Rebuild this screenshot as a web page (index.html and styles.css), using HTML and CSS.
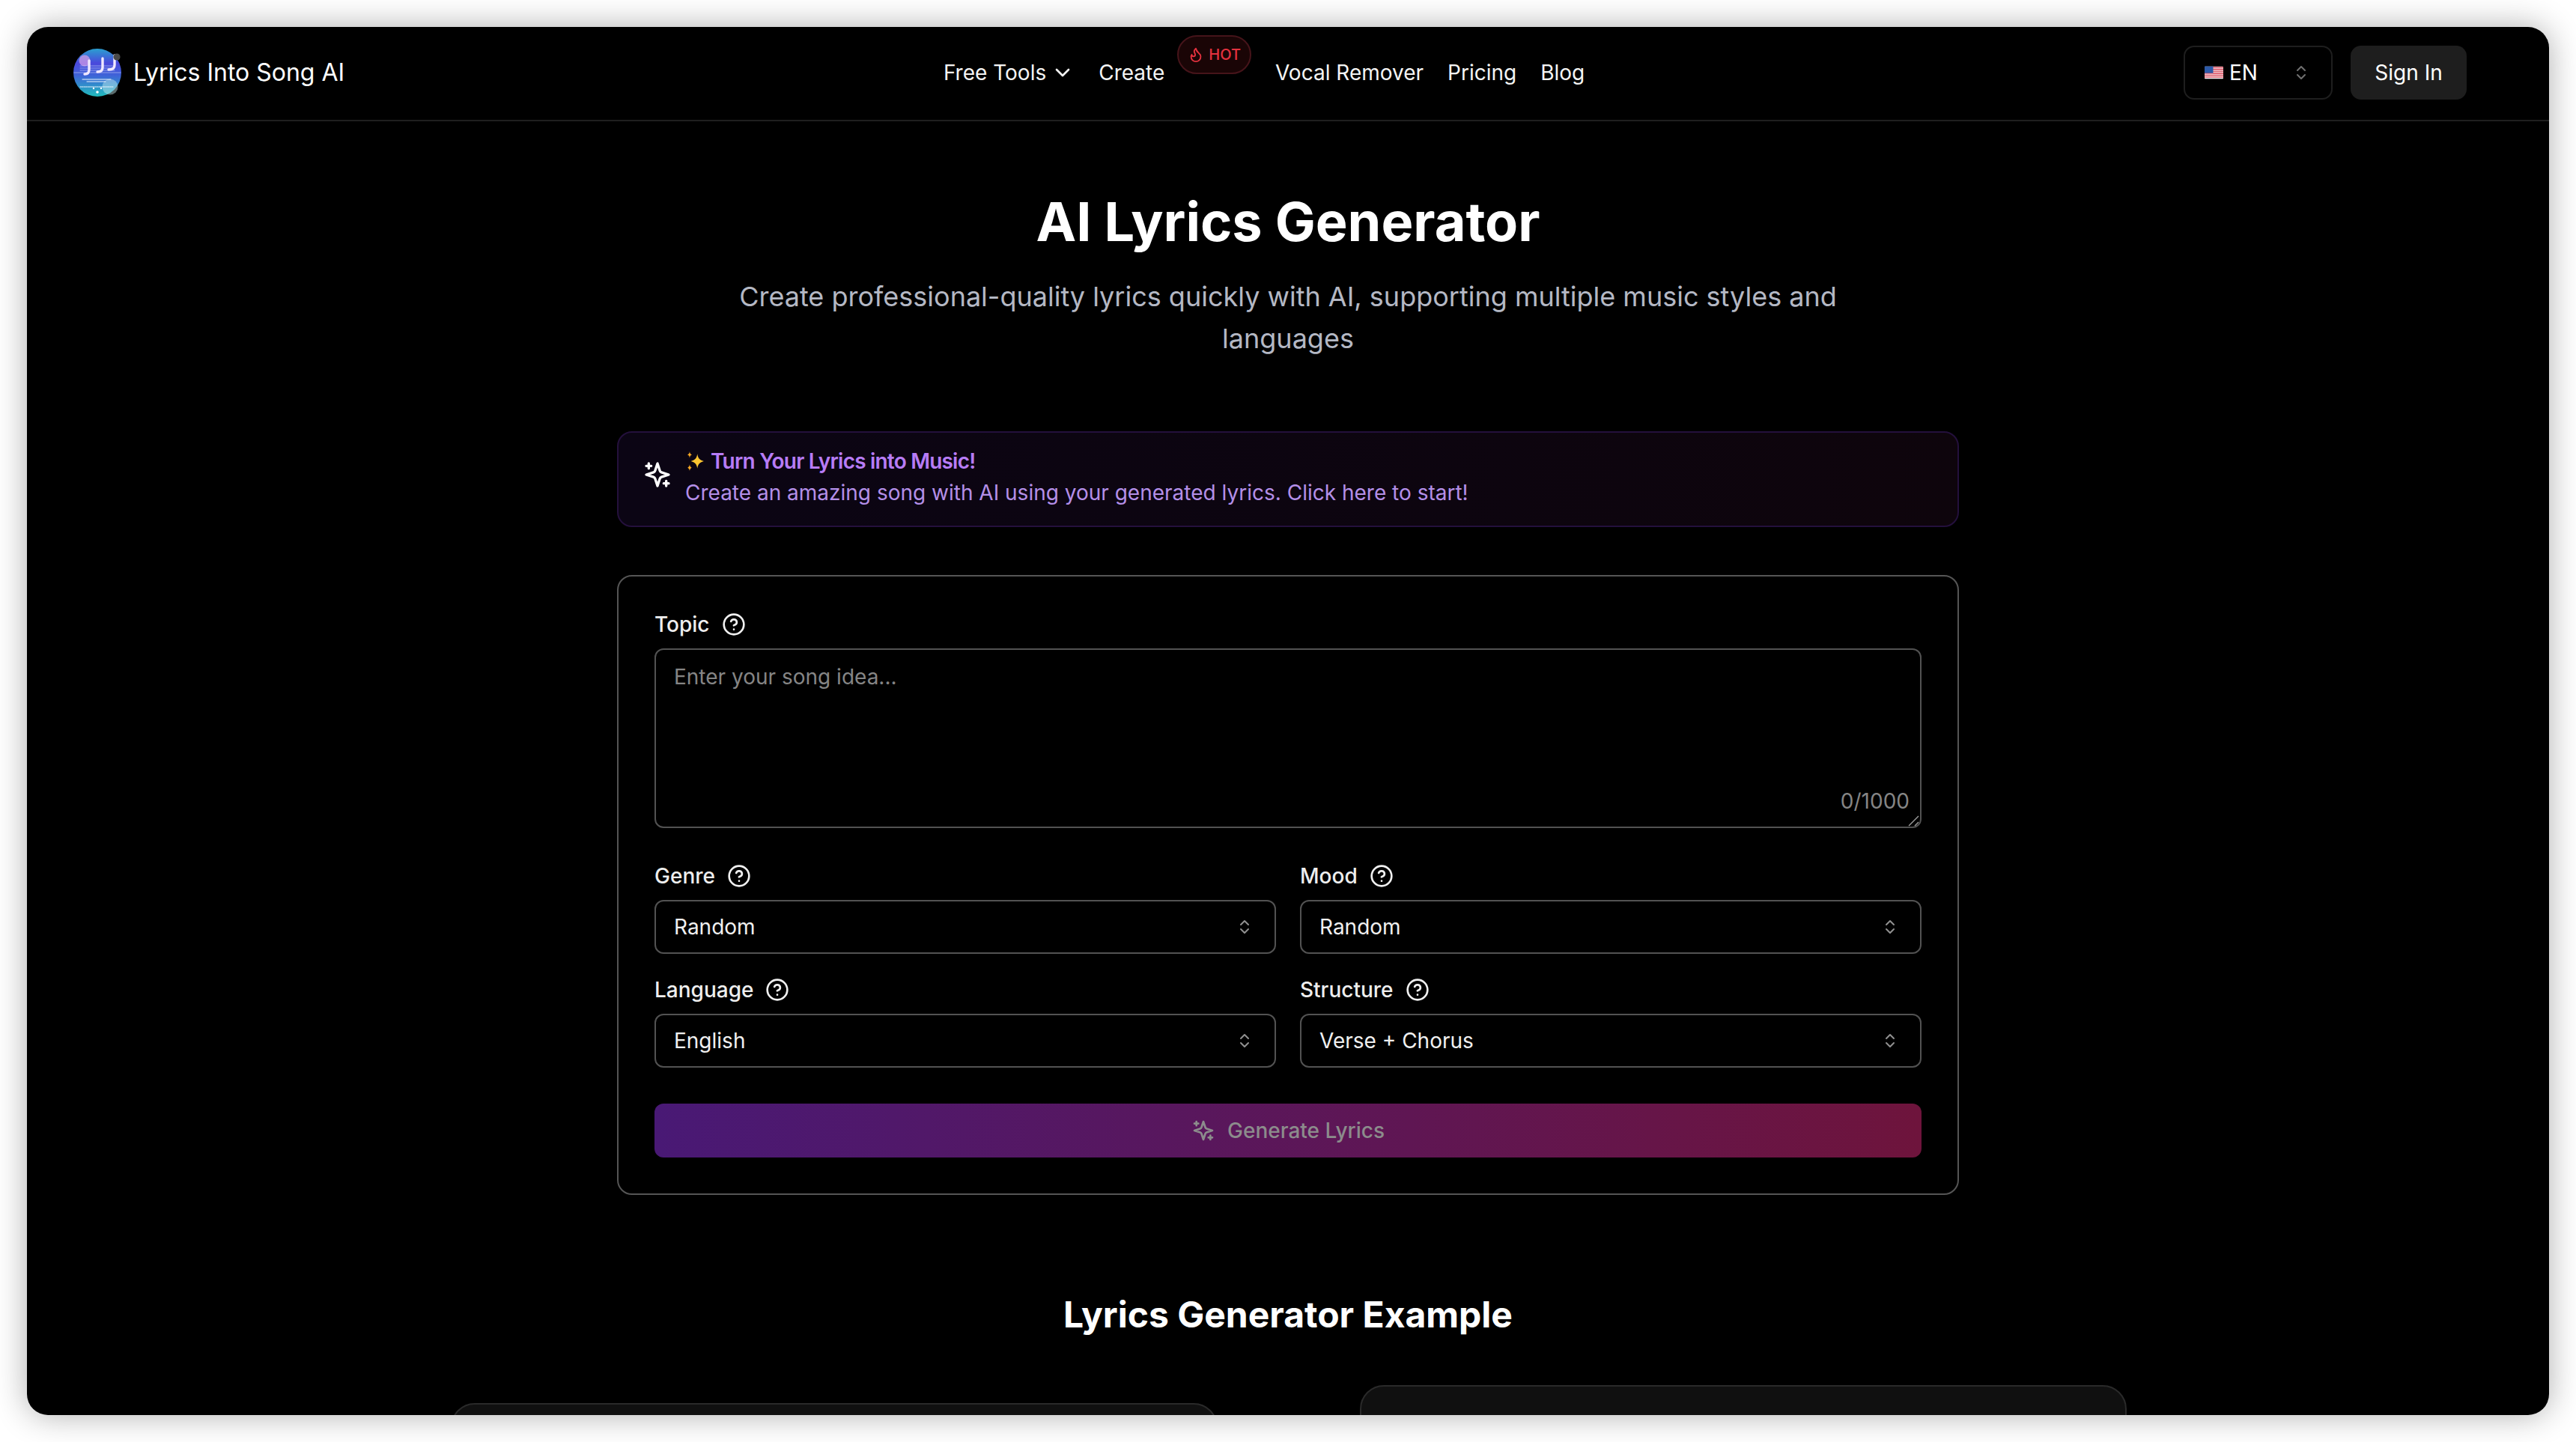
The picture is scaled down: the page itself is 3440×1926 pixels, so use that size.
FILE: index.html
```html
<!DOCTYPE html>
<html lang="en">
<head>
<meta charset="UTF-8">
<title>AI Lyrics Generator</title>
<link rel="stylesheet" href="styles.css">
</head>
<body>
<svg class="icon-defs" aria-hidden="true">
    <symbol id="i-sparkles" viewBox="0 0 24 24">
        <path d="m12 3-1.912 5.813a2 2 0 0 1-1.275 1.275L3 12l5.813 1.912a2 2 0 0 1 1.275 1.275L12 21l1.912-5.813a2 2 0 0 1 1.275-1.275L21 12l-5.813-1.912a2 2 0 0 1-1.275-1.275L12 3Z"/>
        <path d="M5 3v4M19 17v4M3 5h4M17 19h4"/>
    </symbol>
    <symbol id="i-help" viewBox="0 0 24 24">
        <circle cx="12" cy="12" r="10"/>
        <path d="M9.09 9a3 3 0 0 1 5.83 1c0 2-3 3-3 3M12 17h.01"/>
    </symbol>
    <symbol id="i-updown" viewBox="0 0 24 24">
        <path d="m7 15 5 5 5-5M7 9l5-5 5 5"/>
    </symbol>
</svg>

<div class="window">
    <header class="header">
        <a class="brand">
            <svg class="logo" viewBox="0 0 64 64">
                <defs>
                    <linearGradient id="logoFill" x1="0" y1="0" x2="0" y2="1">
                        <stop offset="0" stop-color="#2a9fd0"/>
                        <stop offset="0.3" stop-color="#4a48dc"/>
                        <stop offset="0.55" stop-color="#3f62d8"/>
                        <stop offset="1" stop-color="#20bcbc"/>
                    </linearGradient>
                </defs>
                <circle cx="32" cy="32" r="32" fill="url(#logoFill)"/>
                <circle cx="15" cy="16" r="7.500" fill="#d9a0e8" opacity="0.7"/>
                <circle cx="49" cy="51" r="10.500" fill="#c8eef0" opacity="0.45"/>
                <path d="M9 23h46M9 26h46M1 32h62M9 29h46" stroke="#dfe6ff" stroke-width="0.7" opacity="0.7" fill="none"/>
                <path d="M12 41h38M18 44h25" stroke="#eef4ff" stroke-width="1" fill="none"/>
                <path d="M9 51h45" stroke="#eef4ff" stroke-width="1" stroke-dasharray="1.500 1" fill="none"/>
                <path d="M21 16v12q0 6-6 6M39 13v12q0 6-7 6M55 9v13q0 6-8 6" stroke="#f0e8ff" stroke-width="3.400" stroke-linecap="round" fill="none"/>
                <circle cx="27" cy="53" r="1.200" fill="#fff"/>
                <circle cx="37" cy="53" r="1.200" fill="#fff"/>
                <circle cx="32" cy="58" r="1.800" fill="#fff"/>
                <circle cx="58" cy="11" r="4.600" fill="#4a4a4a"/>
            </svg>
            <span>Lyrics Into Song AI</span>
        </a>
        <nav class="nav">
            <a class="nav-item">Free Tools
                <svg class="nav-chevron" viewBox="0 0 24 24"><path d="m6 9 6 6 6-6"/></svg>
            </a>
            <a class="nav-item nav-create">Create
                <span class="hot-badge">
                    <svg viewBox="0 0 24 24"><path d="M8.5 14.5A2.5 2.5 0 0 0 11 12c0-1.38-.5-2-1-3-1.072-2.143-.224-4.054 2-6 .5 2.5 2 4.9 4 6.5 2 1.6 3 3.5 3 5.5a7 7 0 1 1-14 0c0-1.153.433-2.294 1-3a2.5 2.5 0 0 0 2.5 2.5z"/></svg>
                    HOT
                </span>
            </a>
            <a class="nav-item">Vocal Remover</a>
            <a class="nav-item">Pricing</a>
            <a class="nav-item">Blog</a>
        </nav>
        <div class="header-actions">
            <div class="lang-select">
                <span class="lang-value">
                    <svg class="flag" viewBox="0 0 24 16">
                        <rect width="24" height="16" rx="1" fill="#f4f4f4"/>
                        <path d="M0 1.2h24M0 3.7h24M0 6.2h24M0 8.7h24M0 11.2h24M0 13.7h24" stroke="#d8344a" stroke-width="1.25"/>
                        <rect width="11" height="8.6" fill="#2d5aa8"/>
                    </svg>
                    EN
                </span>
                <svg class="updown"><use href="#i-updown"/></svg>
            </div>
            <button class="signin">Sign In</button>
        </div>
    </header>

    <main class="main">
        <h1 class="title">AI Lyrics Generator</h1>
        <p class="subtitle">Create professional-quality lyrics quickly with AI, supporting multiple music styles and languages</p>

        <a class="promo">
            <svg class="promo-icon"><use href="#i-sparkles"/></svg>
            <div class="promo-text">
                <div class="promo-title">
                    <svg class="promo-emoji" viewBox="0 0 24 24">
                        <path d="M15 3c.8 5 2.2 7.2 8 9-5.800 1.800-7.200 4-8 9-.8-5-2.200-7.200-8-9 5.800-1.800 7.200-4 8-9z" fill="#fbc531"/>
                        <path d="M5.500 0c.3 2.400.9 3.200 2.800 4-1.900.8-2.500 1.600-2.800 4-.3-2.400-.9-3.200-2.800-4 1.900-.8 2.500-1.600 2.800-4zM5.500 16c.3 2.200.8 3 2.500 4-1.700 1-2.200 1.800-2.500 4-.3-2.200-.8-3-2.500-4 1.700-1 2.200-1.800 2.500-4z" fill="#f7a825"/>
                    </svg>
                    <span>Turn Your Lyrics into Music!</span>
                </div>
                <div class="promo-desc">Create an amazing song with AI using your generated lyrics. Click here to start!</div>
            </div>
        </a>

        <form class="form-card">
            <div class="field">
                <label class="field-label">Topic <svg class="help"><use href="#i-help"/></svg></label>
                <div class="textarea-wrap">
                    <textarea class="topic-input" placeholder="Enter your song idea..."></textarea>
                    <span class="counter">0/1000</span>
                    <svg class="grip" viewBox="0 0 16 16"><path d="M1 14 14 1M9 14l5-5"/></svg>
                </div>
            </div>
            <div class="field-grid">
                <div class="field">
                    <label class="field-label">Genre <svg class="help"><use href="#i-help"/></svg></label>
                    <div class="select"><span>Random</span><svg class="updown"><use href="#i-updown"/></svg></div>
                </div>
                <div class="field">
                    <label class="field-label">Mood <svg class="help"><use href="#i-help"/></svg></label>
                    <div class="select"><span>Random</span><svg class="updown"><use href="#i-updown"/></svg></div>
                </div>
                <div class="field">
                    <label class="field-label">Language <svg class="help"><use href="#i-help"/></svg></label>
                    <div class="select"><span>English</span><svg class="updown"><use href="#i-updown"/></svg></div>
                </div>
                <div class="field">
                    <label class="field-label">Structure <svg class="help"><use href="#i-help"/></svg></label>
                    <div class="select"><span>Verse + Chorus</span><svg class="updown"><use href="#i-updown"/></svg></div>
                </div>
            </div>
            <button class="generate" type="button">
                <svg><use href="#i-sparkles"/></svg>
                Generate Lyrics
            </button>
        </form>

        <h2 class="example-title">Lyrics Generator Example</h2>
        <div class="examples">
            <div class="example-card example-left"></div>
            <div class="example-card example-right"></div>
        </div>
    </main>
</div>
</body>
</html>
```

FILE: styles.css
```css
* {
    box-sizing: border-box;
}
html, body {
    height: 100%;
}
body {
    margin: 0;
    padding: 36px;
    background-color: #ffffff;
    font-family: Inter, 'Noto Sans', sans-serif;
    color: #ffffff;
    overflow: hidden;
}
.icon-defs {
    display: none;
}
svg {
    fill: none;
    stroke: currentColor;
    stroke-linecap: round;
    stroke-linejoin: round;
    stroke-width: 2;
}
.window {
    height: 100%;
    background-color: #000000;
    border-radius: 28px;
    box-shadow: 0 0 44px rgba(0, 0, 0, 0.32);
    overflow: hidden;
}

/* header */
.header {
    display: flex;
    align-items: center;
    justify-content: space-between;
    height: 126px;
    padding: 0 110px 3px 62px;
    border-bottom: 2px solid #1f1f1f;
}
.brand {
    display: flex;
    align-items: center;
    gap: 16px;
    font-size: 32px;
    line-height: 40px;
}
.logo {
    width: 64px;
    height: 64px;
    stroke: none;
}
.nav {
    display: flex;
    align-items: center;
    gap: 32px;
}
.nav-item {
    display: flex;
    align-items: center;
    font-size: 28px;
    line-height: 40px;
    color: #f4f4f4;
}
.nav-chevron {
    width: 32px;
    height: 32px;
    margin-left: 6px;
}
.nav-create {
    gap: 17px;
}
.hot-badge {
    position: relative;
    top: -24px;
    display: flex;
    align-items: center;
    gap: 6px;
    height: 52px;
    padding: 0 12px;
    background-color: #1a0506;
    border: 2px solid #46141a;
    border-radius: 26px;
    color: #e5323f;
    font-size: 20px;
    font-weight: 500;
    line-height: 24px;
}
.hot-badge svg {
    width: 22px;
    height: 22px;
}
.header-actions {
    display: flex;
    gap: 24px;
}
.lang-select {
    display: flex;
    align-items: center;
    justify-content: space-between;
    width: 199px;
    height: 72px;
    padding: 0 28px 0 26px;
    border: 2px solid #1e1e1e;
    border-radius: 14px;
    font-size: 28px;
}
.lang-value {
    display: flex;
    align-items: center;
    gap: 8px;
}
.flag {
    width: 25px;
    height: 18px;
    stroke: none;
}
.flag path {
    stroke: #d8344a;
}
.updown {
    width: 24px;
    height: 24px;
    color: #707070;
    flex-shrink: 0;
}
.signin {
    width: 155px;
    height: 72px;
    background-color: #1e1e1e;
    border: none;
    border-radius: 14px;
    color: #ffffff;
    font-family: inherit;
    font-size: 28px;
}

/* main column */
.main {
    display: flex;
    flex-direction: column;
    align-items: center;
    padding-top: 94px;
}
.title {
    margin: 0;
    font-size: 72px;
    font-weight: 700;
    line-height: 80px;
}
.subtitle {
    width: 1536px;
    margin: 32px 0 0;
    color: #b4b8c4;
    font-size: 36px;
    line-height: 56px;
    text-align: center;
}
.promo {
    display: flex;
    align-items: center;
    gap: 17px;
    width: 1792px;
    height: 128px;
    margin-top: 96px;
    padding: 0 32px 6px;
    background-image: linear-gradient(90deg, #0b0514, #0e050c);
    border: 2px solid #24103c;
    border-radius: 20px;
}
.promo-icon {
    width: 40px;
    height: 40px;
    margin-bottom: 6px;
    color: #ffffff;
    flex-shrink: 0;
}
.promo-title {
    display: flex;
    align-items: center;
    gap: 8px;
    color: #b77cf6;
    font-size: 28px;
    font-weight: 600;
    line-height: 42px;
    letter-spacing: -0.8px;
}
.promo-emoji {
    width: 26px;
    height: 26px;
    stroke: none;
}
.promo-desc {
    color: #b48fe8;
    font-size: 28px;
    line-height: 42px;
}

/* form */
.form-card {
    display: flex;
    flex-direction: column;
    gap: 48px;
    width: 1792px;
    margin-top: 64px;
    padding: 48px;
    border: 2px solid #555555;
    border-radius: 20px;
}
.field {
    display: flex;
    flex-direction: column;
    gap: 16px;
}
.field-label {
    display: flex;
    align-items: center;
    gap: 16px;
    height: 32px;
    color: #eeeeee;
    font-size: 28px;
    font-weight: 500;
}
.help {
    width: 32px;
    height: 32px;
    color: #f0f0f0;
}
.textarea-wrap {
    position: relative;
}
.topic-input {
    display: block;
    width: 100%;
    height: 240px;
    padding: 18px 24px;
    background-color: #000000;
    border: 2px solid #525252;
    border-radius: 12px;
    color: #ffffff;
    font-family: inherit;
    font-size: 28px;
    line-height: 36px;
    resize: none;
}
.topic-input::placeholder {
    color: #858585;
}
.counter {
    position: absolute;
    right: 16px;
    bottom: 18px;
    color: #858585;
    font-size: 28px;
    line-height: 36px;
}
.grip {
    position: absolute;
    right: 2px;
    bottom: 1px;
    width: 16px;
    height: 16px;
    color: #a0a0a0;
    stroke-width: 1.4;
    stroke-linecap: butt;
}
.field-grid {
    display: grid;
    grid-template-columns: 1fr 1fr;
    gap: 32px;
}
.select {
    display: flex;
    align-items: center;
    justify-content: space-between;
    height: 72px;
    padding: 0 28px 0 24px;
    border: 2px solid #525252;
    border-radius: 12px;
    color: #f0f0f0;
    font-size: 28px;
}
.select .updown {
    color: #909090;
}
.generate {
    display: flex;
    align-items: center;
    justify-content: center;
    gap: 16px;
    height: 72px;
    background-image: linear-gradient(90deg, #491975, #6e143c);
    border: none;
    border-radius: 12px;
    color: #8c8c8c;
    font-family: inherit;
    font-size: 28px;
    font-weight: 500;
}
.generate svg {
    width: 32px;
    height: 32px;
}

/* examples, cut off by the window */
.example-title {
    margin: 132px 0 0;
    font-size: 48px;
    font-weight: 700;
    line-height: 56px;
}
.examples {
    display: flex;
    justify-content: center;
    gap: 190px;
    width: 100%;
    padding-left: 2px;
}
.example-card {
    width: 1024px;
    height: 300px;
    background-color: #101010;
    border: 2px solid #2a2a2a;
    border-radius: 32px;
}
.example-left {
    margin-top: 90px;
}
.example-right {
    margin-top: 66px;
}
```
